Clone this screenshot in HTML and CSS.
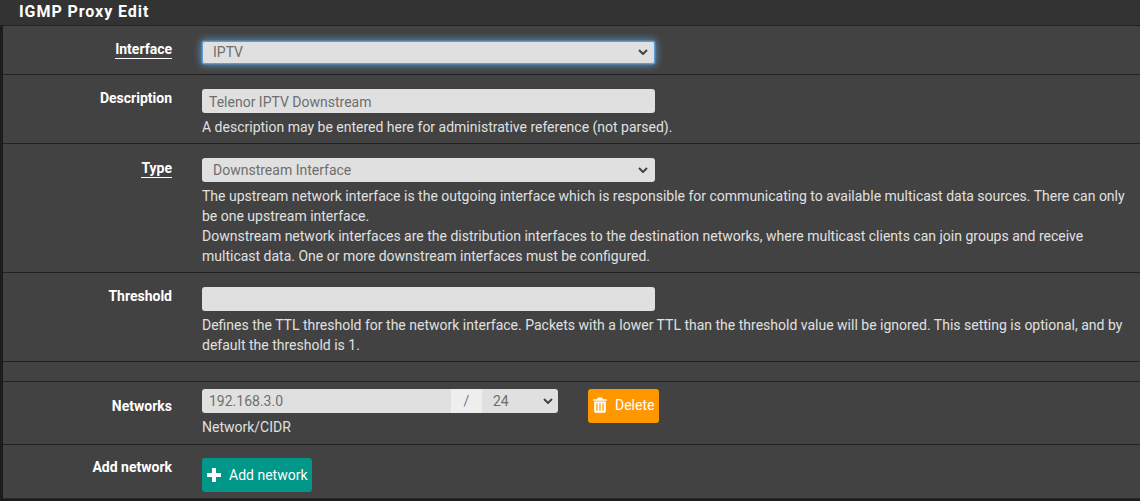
FILE: index.html
```html
<!DOCTYPE html>
<html lang="en">
  <head>
    <meta charset="UTF-8" />
    <title>IGMP Proxy Edit</title>
    <link rel="stylesheet" href="styles.css">
  </head>
  <body>
    <div class="panel">
      <h2 class="panel-title">IGMP Proxy Edit</h2>

      <div class="row row-interface">
        <label class="row-label"><span class="required">Interface</span></label>
        <div class="row-body">
          <div class="field field-focus">IPTV<svg class="caret" viewBox="0 0 10 6"><path d="M1 1l4 4 4-4" /></svg></div>
        </div>
      </div>

      <div class="row row-description">
        <label class="row-label">Description</label>
        <div class="row-body">
          <div class="field field-text">Telenor IPTV Downstream</div>
          <p class="help">A description may be entered here for administrative reference (not parsed).</p>
        </div>
      </div>

      <div class="row row-type">
        <label class="row-label"><span class="required">Type</span></label>
        <div class="row-body">
          <div class="field field-select">Downstream Interface<svg class="caret" viewBox="0 0 10 6"><path d="M1 1l4 4 4-4" /></svg></div>
          <p class="help">The upstream network interface is the outgoing interface which is responsible for communicating to available multicast data sources. There can only be one upstream interface.<br>Downstream network interfaces are the distribution interfaces to the destination networks, where multicast clients can join groups and receive multicast data. One or more downstream interfaces must be configured.</p>
        </div>
      </div>

      <div class="row row-threshold">
        <label class="row-label">Threshold</label>
        <div class="row-body">
          <div class="field"></div>
          <p class="help">Defines the TTL threshold for the network interface. Packets with a lower TTL than the threshold value will be ignored. This setting is optional, and by default the threshold is 1.</p>
        </div>
      </div>

      <div class="row-spacer"></div>

      <div class="row row-networks">
        <label class="row-label">Networks</label>
        <div class="row-body network-line">
          <div class="cidr-col">
            <div class="cidr">
              <div class="cidr-ip">192.168.3.0</div>
              <div class="cidr-slash">/</div>
              <div class="cidr-mask">24<svg class="caret" viewBox="0 0 10 6"><path d="M1 1l4 4 4-4" /></svg></div>
            </div>
            <p class="help">Network/CIDR</p>
          </div>
          <button class="btn btn-delete">
            <svg class="icon" viewBox="0 0 14 16"><path d="M5 0.5h4l1 1.7h3.2a.6.6 0 0 1 .6.6v.9H.2v-.9a.6.6 0 0 1 .6-.6H4zM1.2 4.6h11.6v9.6a1.5 1.5 0 0 1-1.5 1.5H2.7a1.5 1.5 0 0 1-1.5-1.5zM3.4 6.2v7.6h1.2V6.2zM6.4 6.2v7.6h1.2V6.2zM9.4 6.2v7.6h1.2V6.2z" fill-rule="evenodd" /></svg>
            Delete
          </button>
        </div>
      </div>

      <div class="row row-add">
        <label class="row-label">Add network</label>
        <div class="row-body">
          <button class="btn btn-add">
            <svg class="icon icon-plus" viewBox="0 0 14 14"><path d="M5 0h4v5h5v4H9v5H5V9H0V5h5z" /></svg>
            Add network
          </button>
        </div>
      </div>
    </div>
  </body>
</html>
```

FILE: styles.css
```css
html, body {
  margin: 0;
  padding: 0;
}
body {
  background-color: #1c1c1c;
  color: #e0e0e0;
  font-family: Roboto, "Liberation Sans", sans-serif;
  font-size: 14px;
  line-height: 20px;
  height: 501px;
  overflow: hidden;
}
.panel {
  margin-left: 3px;
  background-color: #424242;
  border-bottom: 1px solid #2a2a2a;
}
.panel-title {
  margin: 0 0 0 -3px;
  height: 25px;
  padding-left: 19px;
  background-color: #333;
  border-bottom: 1px solid #222;
  color: #fff;
  font-size: 16px;
  font-weight: 700;
  letter-spacing: 0.93px;
  line-height: 24px;
}
.row {
  display: flex;
  border-bottom: 1px solid #222;
  box-sizing: border-box;
}
.row-interface { height: 49px; padding-top: 15px; }
.row-description { height: 69px; padding-top: 14px; }
.row-type { height: 129px; padding-top: 14px; }
.row-threshold { height: 89px; padding-top: 14px; }
.row-networks { height: 63px; padding-top: 7px; }
.row-add { height: 53px; padding-top: 13px; border-bottom: 0; }
.row-spacer {
  height: 19px;
  border-bottom: 1px solid #222;
}
.row-label {
  flex: 0 0 169px;
  text-align: right;
  color: #fff;
  font-weight: 700;
  font-size: 14px;
  line-height: 18px;
}
.row-interface .row-label {
  margin-top: -1px;
}
.row-type .row-label {
  margin-top: 1px;
}
.row-networks .row-label {
  margin-top: 8px;
}
.required {
  border-bottom: 1px solid #fff;
  padding-bottom: 1px;
}
.row-body {
  margin-left: 30px;
  flex: 1;
  padding-right: 12px;
}
.field {
  box-sizing: border-box;
  width: 453px;
  height: 24px;
  padding: 0 7px;
  background-color: #e0e0e0;
  border-radius: 3px;
  color: #6e6e6e;
  font-size: 14px;
  line-height: 24px;
  display: flex;
  align-items: center;
  justify-content: space-between;
}
.field-text {
  padding-top: 1px;
}
.field-focus {
  height: 23px;
  padding-left: 11px;
  padding-bottom: 1px;
  box-shadow: inset 0 0 0 1px #5b9dd9, 0 0 0 1px rgba(91, 157, 217, 0.35), 0 0 7px 2px rgba(102, 175, 233, 0.6);
}
.field-select {
  padding-left: 11px;
}
.caret {
  width: 10px;
  height: 6px;
  fill: none;
  stroke: #444;
  stroke-width: 2;
  flex: none;
}
.help {
  margin: 4px 0 0;
  font-size: 14px;
  line-height: 20px;
}
.network-line {
  display: flex;
  align-items: flex-start;
}
.cidr {
  display: flex;
  width: 356px;
  height: 24px;
  background-color: #e0e0e0;
  border-radius: 3px;
  color: #6e6e6e;
  font-size: 14px;
  line-height: 25px;
  overflow: hidden;
}
.cidr-ip {
  flex: 0 0 249px;
  padding-left: 7px;
  box-sizing: border-box;
}
.cidr-slash {
  flex: 0 0 31px;
  text-align: center;
  background-color: #eee;
  color: #6b7a99;
}
.cidr-mask {
  flex: 1;
  padding: 0 5px 0 11px;
  display: flex;
  align-items: center;
  justify-content: space-between;
}
.btn {
  display: inline-flex;
  align-items: center;
  border: 0;
  border-radius: 3px;
  color: #fff;
  font-family: inherit;
  font-size: 14px;
  padding: 0;
}
.icon {
  fill: #fff;
  flex: none;
}
.btn-delete {
  margin-left: 30px;
  width: 71px;
  height: 34px;
  padding: 0 0 2px 5px;
  gap: 8px;
  background-color: #ff9800;
}
.btn-delete .icon {
  width: 14px;
  height: 16px;
}
.btn-add {
  width: 110px;
  height: 34px;
  padding-left: 5px;
  gap: 8px;
  background-color: #009688;
}
.icon-plus {
  width: 14px;
  height: 14px;
}
```
